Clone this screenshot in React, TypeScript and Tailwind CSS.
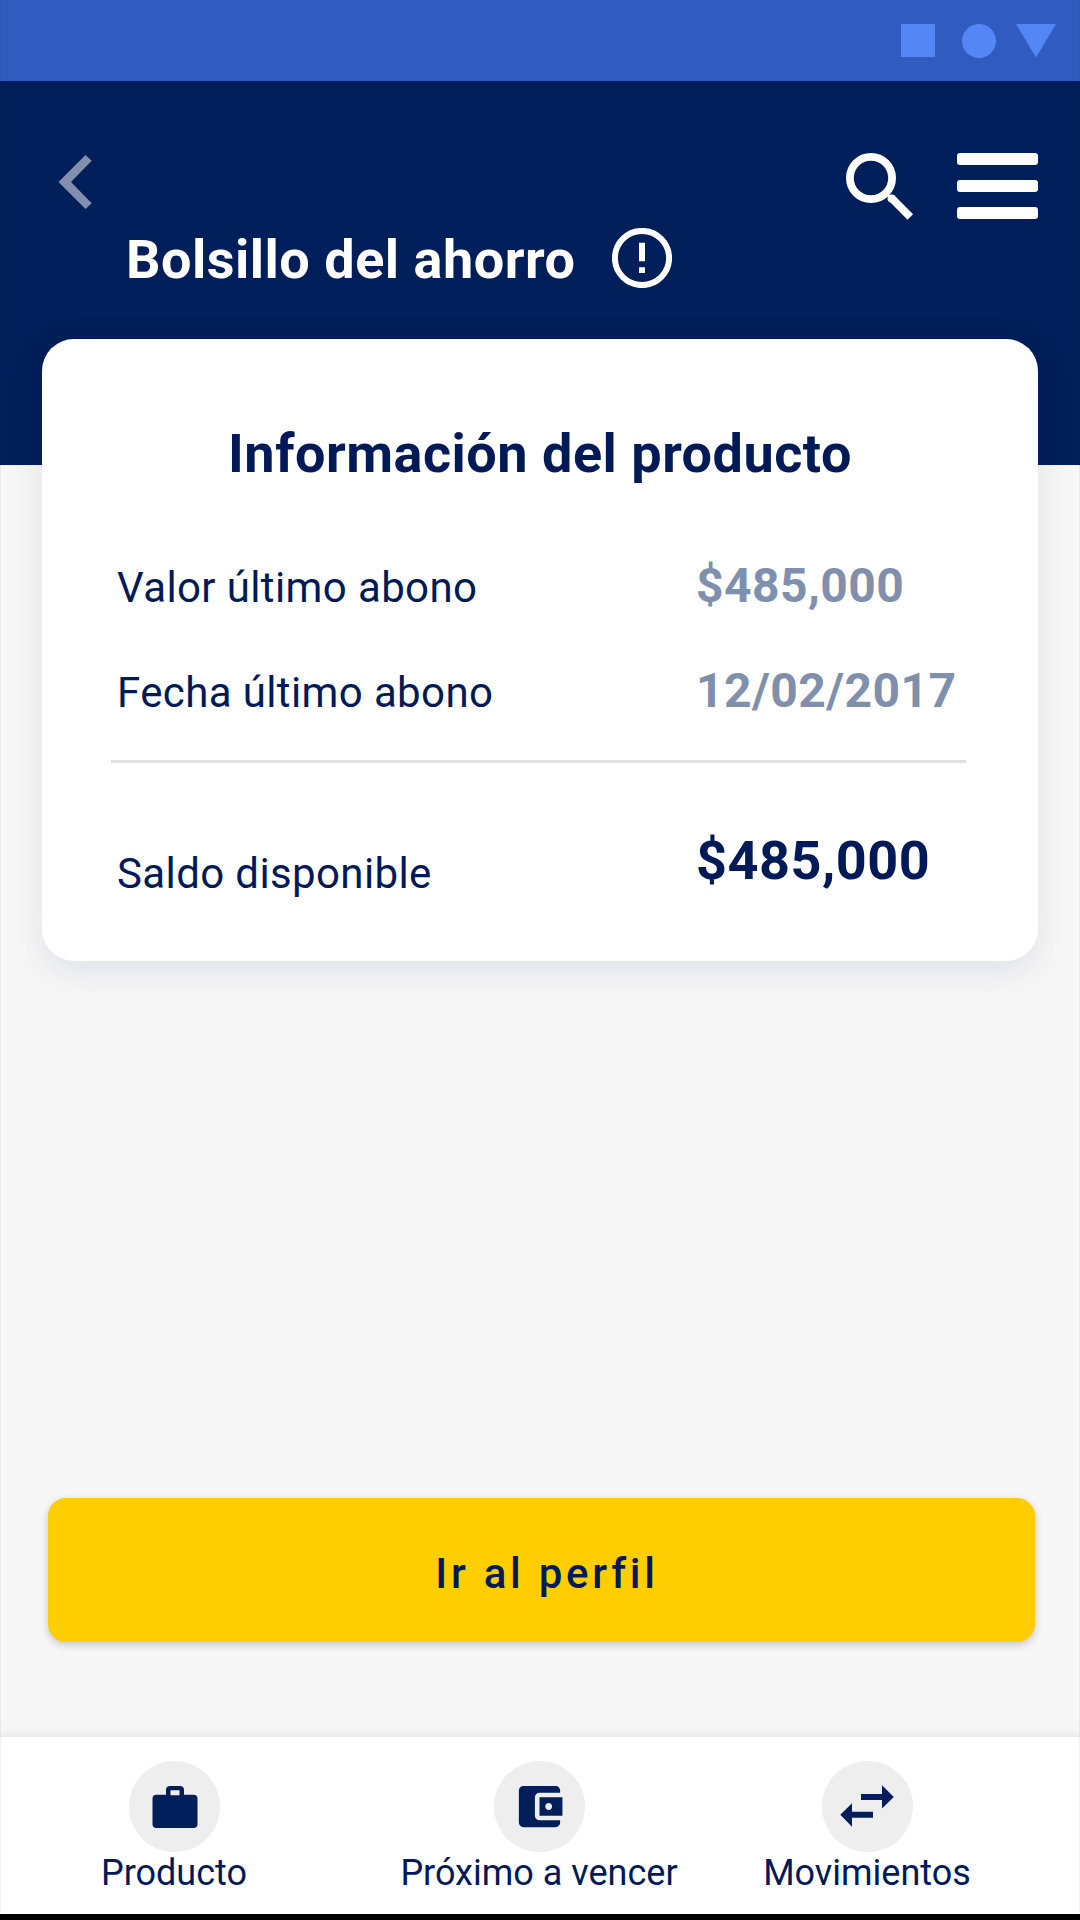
import type { ReactNode } from 'react';
import { MdAccountBalanceWallet } from 'react-icons/md';

const details = [
  { label: 'Valor último abono', value: '$485,000' },
  { label: 'Fecha último abono', value: '12/02/2017' },
];

function StatusBar() {
  return (
    <div className="flex h-[81px] items-start justify-end bg-[#305cc0] pt-6 pr-6">
      <div className="h-[33px] w-[34px] bg-[#5586f6]" />
      <div className="ml-[27px] h-[34px] w-[34px] rounded-full bg-[#5586f6]" />
      <svg width="40" height="34" viewBox="0 0 40 34" className="ml-5 fill-[#5586f6]">
        <path d="M0 0h40L20 33.5z" />
      </svg>
    </div>
  );
}

function Header() {
  return (
    <header className="h-[384px] bg-[#001e59] pt-[72px]">
      <div className="flex h-[67px] items-start pr-[42px] pl-[58px]">
        <button type="button" aria-label="Volver" className="mt-0.5">
          <svg width="34" height="54" viewBox="0 0 34 54" className="fill-[#8290ae]">
            <path d="M.5 27 27.5 0l6.200 5.800L13 27l20.700 21.200-6.200 5.800z" />
          </svg>
        </button>
        <button type="button" aria-label="Buscar" className="ml-auto">
          <svg width="68" height="68" viewBox="0 0 68 68" fill="none" stroke="#fff">
            <circle cx="25" cy="25" r="21.1" strokeWidth="7.8" />
            <path d="M45 44.5 64.3 64" strokeWidth="7.8" />
            <circle cx="45.5" cy="45.5" r="3" strokeWidth="2" fill="#fff" />
          </svg>
        </button>
        <button type="button" aria-label="Menú" className="ml-[43px] flex flex-col gap-[15px]">
          <span className="h-3 w-[81px] rounded-[3px] bg-white" />
          <span className="h-3 w-[81px] rounded-[3px] bg-white" />
          <span className="h-3 w-[81px] rounded-[3px] bg-white" />
        </button>
      </div>
      <div className="mt-2 flex h-[60px] items-center pl-[126px]">
        <h1 className="w-[486px] pt-1 text-[54px] leading-[60px] font-bold tracking-[0.5px] text-white">
          Bolsillo del ahorro
        </h1>
        <svg width="60" height="60" viewBox="0 0 60 60">
          <circle cx="30" cy="30" r="27.1" fill="none" stroke="#fff" strokeWidth="6" />
          <path d="M27 14.800h6v18.400h-6zM27 39.300h6v5.600h-6z" fill="#fff" />
        </svg>
      </div>
    </header>
  );
}

function ProductCard() {
  return (
    <section className="mx-[42px] -mt-[126px] h-[622px] rounded-[32px] bg-white pt-[83px] shadow-[0_10px_36px_rgba(0,30,89,0.1)]">
      <h2 className="text-center text-[54px] leading-[64px] font-bold tracking-[0.5px]">Información del producto</h2>
      <div className="mt-[70px] flex flex-col gap-[43px] pl-[75px]">
        {details.map((row) => (
          <div key={row.label} className="flex h-[62px] items-baseline leading-[60px]">
            <span className="w-[579px] text-[42px] tracking-[0.38px]">{row.label}</span>
            <span className="text-[48px] font-bold tracking-[0.45px] text-[#7f8fac]">{row.value}</span>
          </div>
        ))}
      </div>
      <div className="mt-[37px] mr-[72px] ml-[69px] h-[3px] bg-[#dfe0e2]" />
      <div className="mt-[68px] flex items-start pl-[75px] leading-[60px]">
        <span className="mt-[13px] w-[579px] text-[42px] tracking-[0.38px]">Saldo disponible</span>
        <span className="text-[54px] font-bold tracking-[0.5px]">$485,000</span>
      </div>
    </section>
  );
}

function NavItem({ label, className, children }: { label: string; className: string; children: ReactNode }) {
  return (
    <button type="button" className={`flex flex-col items-center ${className}`}>
      <span className="flex h-[91px] w-[91px] items-center justify-center rounded-full bg-[#eeeeef]">{children}</span>
      <span className="mt-px text-[36px] leading-[40px] whitespace-nowrap">{label}</span>
    </button>
  );
}

function BottomNav() {
  return (
    <nav className="flex h-[177px] bg-white pt-6 pl-[74px] shadow-[0_-3px_10px_rgba(0,0,0,0.08)]">
      <NavItem label="Producto" className="w-[200px]">
        <svg width="46" height="42" viewBox="0 0 46 42" className="ml-0.5 fill-[#001e59]">
          <path
            fillRule="evenodd"
            d="M18 0h10q4 0 4 4v4.7h9.500q4 0 4 4V38q0 4-4 4h-37q-4 0-4-4V12.700q0-4 4-4H14V4q0-4 4-4zm.5 4.300v5h9v-5z"
          />
        </svg>
      </NavItem>
      <NavItem label="Próximo a vencer" className="ml-[115px] w-[300px]">
        <MdAccountBalanceWallet size={55} color="#001e59" />
      </NavItem>
      <NavItem label="Movimientos" className="ml-[53px] w-[250px]">
        <svg width="54" height="42" viewBox="0 0 54 42" className="mb-px fill-[#001e59]">
          <path d="M42 .3 53.800 12 42 23.600V15H21V9h21zM12 18.200V26.700h21v6H12v9L.3 29.700z" />
        </svg>
      </NavItem>
    </nav>
  );
}

export default function App() {
  return (
    <div className="relative flex h-[1920px] w-[1080px] flex-col overflow-hidden bg-[#f7f7f7] font-[Roboto,sans-serif] text-[#001a57]">
      <StatusBar />
      <Header />
      <ProductCard />
      <button
        type="button"
        className="mt-[537px] mr-[45px] ml-12 h-36 rounded-[18px] bg-[#ffce00] pt-1.5 pl-[11px] text-[42px] font-medium tracking-[3.75px] shadow-[0_3px_8px_rgba(0,0,0,0.2)]"
      >
        Ir al perfil
      </button>
      <div className="mt-auto">
        <BottomNav />
        <div className="h-1.5 bg-black" />
      </div>
      {/* hairline along the screen edges */}
      <div className="pointer-events-none absolute inset-0 border-x border-black/5" />
    </div>
  );
}
